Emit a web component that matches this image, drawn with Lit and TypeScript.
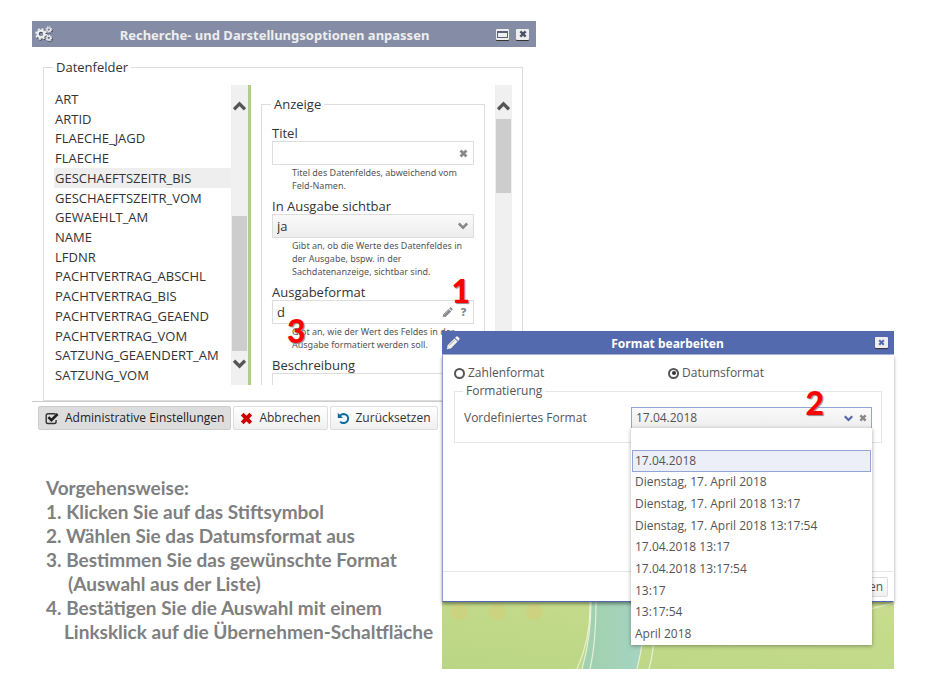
import { LitElement, html, css, svg } from "lit";
import { customElement, state } from "lit/decorators.js";
import { classMap } from "lit/directives/class-map.js";

const FIELDS = [
  "ART", "ARTID", "FLAECHE_JAGD", "FLAECHE", "GESCHAEFTSZEITR_BIS",
  "GESCHAEFTSZEITR_VOM", "GEWAEHLT_AM", "NAME", "LFDNR",
  "PACHTVERTRAG_ABSCHL", "PACHTVERTRAG_BIS", "PACHTVERTRAG_GEAEND",
  "PACHTVERTRAG_VOM", "SATZUNG_GEAENDERT_AM", "SATZUNG_VOM",
];

const FORMATS = [
  "17.04.2018", "Dienstag, 17. April 2018", "Dienstag, 17. April 2018 13:17",
  "Dienstag, 17. April 2018 13:17:54", "17.04.2018 13:17",
  "17.04.2018 13:17:54", "13:17", "13:17:54", "April 2018",
];

const cross = (size: number) => svg`
  <svg width=${size} height=${size} viewBox="0 0 10 10" aria-hidden="true">
    <path d="M1.7 1.7 8.3 8.3M8.3 1.7 1.7 8.3" fill="none" stroke="currentColor" stroke-width="3"/>
  </svg>`;

const chevron = (w: number, h: number, up = false) => svg`
  <svg width=${w} height=${h} viewBox="0 0 12 9" aria-hidden="true">
    <path d=${up ? "M1 7.5 6 2.5 11 7.5" : "M1 1.5 6 6.5 11 1.5"} fill="none" stroke="currentColor" stroke-width="3"/>
  </svg>`;

const pencil = (size: number, line = "#fff") => svg`
  <svg width=${size} height=${size} viewBox="0 0 14 14" aria-hidden="true">
    <path d="M.8 13.2 1.6 9.2 8.4 2.4 11.6 5.6 4.8 12.4ZM9.1 1.7 10.3.6Q11.2 0 12 .8L13.2 2Q14 2.8 13.3 3.6L12.3 4.9Z" fill="currentColor"/>
    <path d="M3 9.7 8.8 3.9M1.6 11.3 2.7 12.4" stroke=${line} stroke-opacity=".6" stroke-width=".8"/>
  </svg>`;

const gears = svg`
  <svg width="18" height="16" viewBox="0 0 18 16" aria-hidden="true">
    <g fill="none" stroke="#444a5c" transform="translate(.7 .9)">
      <circle cx="6" cy="8" r="3.4" stroke-width="2.4"/>
      <circle cx="6" cy="8" r="5" stroke-width="1.8" stroke-dasharray="2 1.93"/>
      <circle cx="13.8" cy="3.6" r="2.4" stroke-width="1.8" stroke-dasharray="1.3 .58"/>
      <circle cx="13.8" cy="12" r="2.4" stroke-width="1.8" stroke-dasharray="1.3 .58"/>
    </g>
    <g fill="none" stroke="#eee">
      <circle cx="6" cy="8" r="3.4" stroke-width="2.4"/>
      <circle cx="6" cy="8" r="5" stroke-width="1.8" stroke-dasharray="2 1.93"/>
      <circle cx="13.8" cy="3.6" r="1.8" stroke-width="1.2"/>
      <circle cx="13.8" cy="3.6" r="2.7" stroke-width="1.2" stroke-dasharray="1.2 .92"/>
      <circle cx="13.8" cy="12" r="1.8" stroke-width="1.2"/>
      <circle cx="13.8" cy="12" r="2.7" stroke-width="1.2" stroke-dasharray="1.2 .92"/>
    </g>
  </svg>`;

const tick = svg`
  <svg width="14" height="13" viewBox="0 0 14 13" aria-hidden="true">
    <path d="M10.5 1.7H3Q1.2 1.7 1.2 3.5V9.7Q1.2 11.5 3 11.5H9.3Q11.1 11.5 11.1 9.7V8" fill="none" stroke="#333" stroke-width="1.4"/>
    <path d="M3.4 5.2 6.4 8.2 12.6 2" fill="none" stroke="#222" stroke-width="2.6"/>
  </svg>`;

const undo = svg`
  <svg width="13" height="13" viewBox="0 0 13 13" aria-hidden="true">
    <path d="M3 3.6Q4.6 1.9 6.7 1.9A4.6 4.6 0 1 1 3.2 9.6" fill="none" stroke="#0b6aa2" stroke-width="2"/>
    <path d="M.8.8V6H6Z" fill="#0b6aa2"/>
  </svg>`;

const wallpaper = svg`
  <svg class="wallpaper" viewBox="0 0 452 67" preserveAspectRatio="none" aria-hidden="true">
    <defs>
      <linearGradient id="g" x1="0" y1="1" x2="1" y2="0">
        <stop offset="0" stop-color="#bad684"/><stop offset="1" stop-color="#c8dd8f"/>
      </linearGradient>
      <linearGradient id="t" x1="0" y1="0" x2="1" y2="0">
        <stop offset="0" stop-color="#a1d0ad"/><stop offset="1" stop-color="#a5d4c2"/>
      </linearGradient>
    </defs>
    <rect width="452" height="67" fill="url(#g)"/>
    <path d="M149 0Q149 36 140 67H195Q203 36 203 0Z" fill="url(#t)"/>
    <g fill="#d3cf79" fill-opacity=".6">
      <circle cx="17" cy="10" r="8.5"/><circle cx="55" cy="10" r="8.5"/><circle cx="92" cy="10" r="8.5"/>
    </g>
    <g fill="none" stroke="#f2f8e6" stroke-opacity=".8" stroke-width="1.2">
      <path d="M148 0Q149 36 135 67"/><path d="M149 0Q149 36 140 67"/><path d="M154 0Q154 40 148 67"/>
      <path d="M203 0Q203 36 195 67"/><path d="M213 20Q212 50 207 67"/><path d="M420 9Q440 4 452 1"/>
    </g>
  </svg>`;

@customElement("app-root")
export class AppRoot extends LitElement {
  @state() private field = "GESCHAEFTSZEITR_BIS";
  @state() private format = FORMATS[0];

  static styles = css`
    :host {
      display: block;
      min-height: 100vh;
      background: #fff;
      color: #333;
      font: 13px/18px "Open Sans", "Noto Sans", sans-serif;
    }
    * { box-sizing: border-box; }
    button, input, select { font: inherit; color: inherit; margin: 0; }
    button { cursor: pointer; }
    svg { display: block; flex: none; }
    fieldset { min-width: 0; margin: 0; border: 1px solid #ddd; }

    .stage {
      display: grid;
      grid-template-columns: 410fr 94fr 358fr;
      grid-template-rows: auto 1fr;
      padding: 21px 31px 23px 32px;
    }
    .options { grid-area: 1 / 1 / 2 / 3; min-width: 0; }
    .steps { grid-area: 2 / 1 / 3 / 2; }
    .format { grid-area: 1 / 2 / 3 / 4; margin-top: 310px; min-width: 0; z-index: 1; }

    .bar { display: flex; align-items: center; color: #eee; }
    .bar h2 {
      flex: 1; margin: 0; padding-top: 2px; text-align: center; white-space: nowrap;
      font: 700 13px/18px "Noto Sans", sans-serif;
    }
    .options .bar { height: 26px; padding: 0 7px 0 3px; background: #858da6; }
    .format .bar { height: 24px; padding: 0 6px 0 4px; background: #536bae; border-bottom: 1px solid #a9b5da; color: #fff; }
    .format .bar h2 { font-size: 12px; }
    .format .bar > svg { color: #f4f2ea; }
    .tools { display: flex; gap: 7px; }
    .tool {
      display: grid; place-items: center;
      width: 13px; height: 11px; padding: 0;
      border: 0; border-radius: 1px; background: #eee; color: #4a5068;
      box-shadow: 0 1px 0 #333;
    }
    .pane { width: 11px; height: 7px; border: 1px solid #59607a; border-top-width: 2px; }
    .format .tool { color: #536bae; box-shadow: 0 1px 1px #333; }

    .options-body { padding: 11px 13px 0 11px; }
    .outer { padding: 9px 10px 15px; }
    legend { padding: 0 3px; line-height: 18px; }
    .split { display: flex; height: 300px; overflow: hidden; }

    .fields {
      flex: 177 1 0; min-width: 0; margin: 0; padding: 4px 0 0; list-style: none;
      display: grid; grid-auto-rows: 1fr;
    }
    .fields li { display: flex; align-items: center; padding-left: 1px; white-space: nowrap; }
    .fields li.on { background: #eee; }
    .scroll { flex: none; width: 17px; padding: 16px 1px; background: #f0f0f0; color: #555; display: flex; flex-direction: column; }
    .scroll svg { align-self: center; }
    .thumb { background: #cdcdcd; }
    .low .thumb { height: 135px; margin-top: auto; margin-bottom: 8px; }
    .high .thumb { height: 74px; margin-top: 8px; }
    .rule { flex: none; width: 3px; background: #b2cf87; }
    .display { flex: 224 1 0; min-width: 0; padding: 10px 10px 0; }
    .display fieldset { height: 400px; padding: 12px 10px 0; }

    .outer > legend, .display legend, .format legend { margin-left: -1px; }

    .group { margin-bottom: 6px; }
    .group label { display: block; line-height: 16px; }
    .field { position: relative; display: flex; align-items: center; height: 24px; border: 1px solid #ddd; padding-right: 5px; gap: 6px; color: #888; }
    .field input, .field select {
      flex: 1; min-width: 0; height: 100%; padding: 0 4px; border: 0; outline: 0;
      background: transparent; color: #333; appearance: none;
    }
    .shade { background: linear-gradient(#fafafa, #ededed); }
    .mini { display: grid; place-items: center; padding: 0; border: 0; background: none; color: #888; line-height: 16px; }
    .help { width: 9px; font-size: 11px; font-weight: 800; }
    .hint { margin: 1px 0 0 20px; font: 9px/13px "Noto Sans", sans-serif; color: #555; }

    .badge { position: absolute; z-index: 2; font: 900 32px/32px Lato, sans-serif; color: #f00; text-shadow: 1px 1px 1px #888; pointer-events: none; }
    .one { right: 3px; top: -26px; }
    .three { left: 14px; top: 14px; }
    .two { right: 47px; top: -21px; }

    .foot { display: flex; gap: 2px; padding: 4px 6px; border-top: 1px solid #ccc; }
    .btn {
      display: flex; align-items: center; gap: 5px; height: 24px; padding: 0 5px;
      border: 1px solid #ddd; border-radius: 2px; background: linear-gradient(#fff, #f0f0f0); white-space: nowrap;
    }
    .foot .btn { font-size: 12px; padding: 0 6px; gap: 6px; }
    .btn.pressed { background: #ddd; border-color: #ccc; color: #222; }
    .red { color: #c00; }

    .steps { padding: 42px 0 0 14px; color: #7f7f7f; font: 700 19px/24px Lato, sans-serif; white-space: nowrap; }
    .steps h3, .steps p { margin: 0; font: inherit; }
    .deep { padding-left: 22px; }
    .deeper { padding-left: 18px; }

    .format { font-size: 12px; color: #555; }
    .sheet { background: #fff; border: 1px solid #8c9dd2; border-top: 0; border-right-color: #fff; border-bottom: 1px solid #536bae; box-shadow: 0 2px 3px rgba(0, 0, 0, .4); position: relative; }
    .format-body { padding: 9px 11px 128px; }
    .kinds { display: grid; grid-template-columns: 1fr 1fr; }
    .kinds label { display: flex; align-items: center; gap: 3px; }
    .kinds input {
      appearance: none; width: 11px; height: 11px; border: 2px solid #555; border-radius: 50%;
      display: grid; place-items: center;
    }
    .kinds input:checked::after { content: ""; width: 4px; height: 4px; border-radius: 50%; background: #333; }
    .format fieldset { padding: 7px 9px 13px; border-color: #e6e6e6; }
    .line { display: grid; grid-template-columns: 167fr 241fr; align-items: center; }
    .format .field { height: 22px; border-color: #93a4d6; padding-right: 4px; }
    .format .field select { color: #555; }
    .blue { color: #536bae; }
    .menu {
      position: absolute; z-index: 1; top: 100%; left: -1px; right: -1px; height: 217px;
      margin: 0; padding: 22px 1px 0; list-style: none; background: #fff; color: #555;
      box-shadow: 0 1px 4px rgba(0, 0, 0, .35);
      display: grid; grid-auto-rows: 1fr;
    }
    .menu li { display: flex; align-items: center; padding-left: 2px; border: 1px solid transparent; white-space: nowrap; }
    .menu li.on { background: #eceff8; border-color: #93a4d6; }
    .end { display: flex; justify-content: flex-end; padding: 5px 5px 4px; border-top: 1px solid #e6e6e6; }
    .end .btn { height: 20px; padding: 0 4px; }
    .wallpaper { width: 100%; height: 67px; }
  `;

  private scrollbar(kind: "low" | "high") {
    return html`<div class="scroll ${kind}">
      ${chevron(13, 10, true)}
      <div class="thumb"></div>
      ${kind === "low" ? chevron(13, 10) : ""}
    </div>`;
  }

  private optionsWindow() {
    return html`<section class="options">
      <header class="bar">
        ${gears}
        <h2>Recherche- und Darstellungsoptionen anpassen</h2>
        <div class="tools">
          <button class="tool" aria-label="Minimieren"><span class="pane"></span></button>
          <button class="tool" aria-label="Schließen">${cross(8)}</button>
        </div>
      </header>
      <div class="options-body">
        <fieldset class="outer">
          <legend>Datenfelder</legend>
          <div class="split">
            <ul class="fields" role="listbox" aria-label="Datenfelder">
              ${FIELDS.map((f) => html`<li role="option" aria-selected=${f === this.field}
                class=${classMap({ on: f === this.field })} @click=${() => (this.field = f)}>${f}</li>`)}
            </ul>
            ${this.scrollbar("low")}
            <div class="rule"></div>
            <div class="display">
              <fieldset>
                <legend>Anzeige</legend>
                <div class="group">
                  <label for="title">Titel</label>
                  <div class="field">
                    <input id="title" type="text">
                    <button class="mini" aria-label="Leeren">${cross(9)}</button>
                  </div>
                  <p class="hint">Titel des Datenfeldes, abweichend vom Feld-Namen.</p>
                </div>
                <div class="group">
                  <label for="visible">In Ausgabe sichtbar</label>
                  <div class="field shade">
                    <select id="visible"><option>ja</option><option>nein</option></select>
                    ${chevron(10, 8)}
                  </div>
                  <p class="hint">Gibt an, ob die Werte des Datenfeldes in der Ausgabe, bspw. in der Sachdatenanzeige, sichtbar sind.</p>
                </div>
                <div class="group">
                  <label for="output">Ausgabeformat</label>
                  <div class="field">
                    <input id="output" type="text" value="d">
                    <button class="mini" aria-label="Bearbeiten">${pencil(11)}</button>
                    <button class="mini help" aria-label="Hilfe">?</button>
                    <span class="badge one">1</span>
                    <span class="badge three">3</span>
                  </div>
                  <p class="hint">Gibt an, wie der Wert des Feldes in der Ausgabe formatiert werden soll.</p>
                </div>
                <div class="group">
                  <label for="description">Beschreibung</label>
                  <div class="field"><input id="description" type="text"></div>
                </div>
              </fieldset>
            </div>
            ${this.scrollbar("high")}
          </div>
        </fieldset>
      </div>
      <footer class="foot">
        <button class="btn pressed">${tick}Administrative Einstellungen</button>
        <button class="btn"><span class="red">${cross(13)}</span>Abbrechen</button>
        <button class="btn">${undo}Zurücksetzen</button>
      </footer>
    </section>`;
  }

  private formatWindow() {
    return html`<section class="format">
      <header class="bar">
        ${pencil(14, "#555")}
        <h2>Format bearbeiten</h2>
        <button class="tool" aria-label="Schließen">${cross(7)}</button>
      </header>
      <div class="sheet">
        <div class="format-body">
          <div class="kinds">
            <label><input type="radio" name="kind">Zahlenformat</label>
            <label><input type="radio" name="kind" checked>Datumsformat</label>
          </div>
          <fieldset>
            <legend>Formatierung</legend>
            <div class="line">
              <label for="preset">Vordefiniertes Format</label>
              <div class="field shade">
                <select id="preset" .value=${this.format}
                  @change=${(e: Event) => (this.format = (e.target as HTMLSelectElement).value)}>
                  ${FORMATS.map((f) => html`<option>${f}</option>`)}
                </select>
                <span class="blue">${chevron(9, 7)}</span>
                <button class="mini" aria-label="Leeren">${cross(8)}</button>
                <span class="badge two">2</span>
                <ul class="menu" role="listbox" aria-label="Vordefiniertes Format">
                  ${FORMATS.map((f) => html`<li role="option" aria-selected=${f === this.format}
                    class=${classMap({ on: f === this.format })} @click=${() => (this.format = f)}>${f}</li>`)}
                </ul>
              </div>
            </div>
          </fieldset>
        </div>
        <footer class="end"><button class="btn">Übernehmen</button></footer>
      </div>
      ${wallpaper}
    </section>`;
  }

  render() {
    return html`<main class="stage">
      ${this.optionsWindow()}
      <section class="steps">
        <h3>Vorgehensweise:</h3>
        <p>1. Klicken Sie auf das Stiftsymbol</p>
        <p>2. Wählen Sie das Datumsformat aus</p>
        <p>3. Bestimmen Sie das gewünschte Format</p>
        <p class="deep">(Auswahl aus der Liste)</p>
        <p>4. Bestätigen Sie die Auswahl mit einem</p>
        <p class="deeper">Linksklick auf die Übernehmen-Schaltfläche</p>
      </section>
      ${this.formatWindow()}
    </main>`;
  }
}
